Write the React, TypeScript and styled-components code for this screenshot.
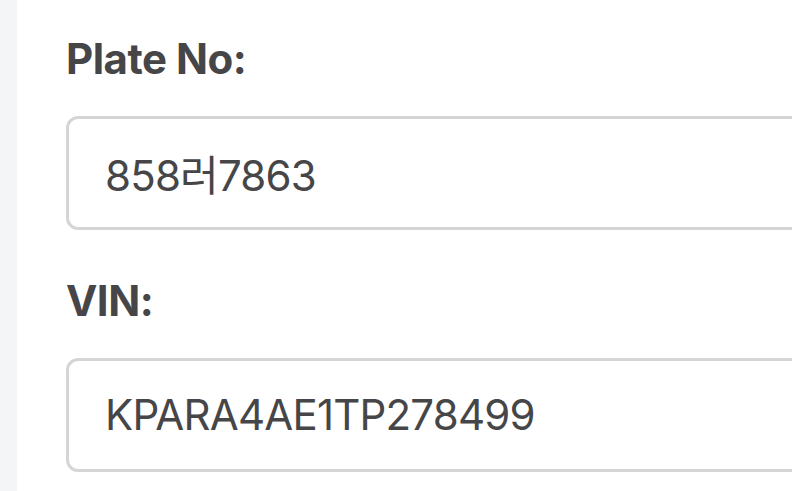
import React from 'react';
import styled, { createGlobalStyle } from 'styled-components';

const GlobalStyle = createGlobalStyle`
  html, body {
    margin: 0;
    padding: 0;
    background: #ffffff;
    overflow: hidden;
  }
  body {
    font-family: Inter, "Noto Sans CJK KR", sans-serif;
  }
`;

const Page = styled.div`
  display: flex;
  width: 792px;
  height: 491px;
  overflow: hidden;
`;

const SideStrip = styled.div`
  flex: 0 0 17px;
  background: #f4f5f7;
`;

const FormPanel = styled.div`
  flex: 1;
  display: flex;
  flex-direction: column;
  padding: 33px 0 0 49px;
  background: #ffffff;
  min-width: 0;
`;

const Field = styled.div`
  display: flex;
  flex-direction: column;
  margin-bottom: 45px;
`;

const Label = styled.label`
  font-family: Inter, "Noto Sans CJK KR", sans-serif;
  font-size: 42px;
  font-weight: 700;
  letter-spacing: -0.5px;
  color: #464648;
  margin-bottom: 32px;
`;

const TextInput = styled.input`
  box-sizing: border-box;
  width: 780px;
  height: 114px;
  padding: 0 36px 2px;
  border: 3px solid #d5d5d7;
  border-radius: 12px;
  font-family: Inter, "Noto Sans CJK KR", sans-serif;
  font-size: 42px;
  font-weight: 400;
  letter-spacing: -0.8px;
  color: #464648;
  background: #ffffff;
  outline: none;
`;

const fields = [
  { id: 'plate', label: 'Plate No:', value: '858러7863' },
  { id: 'vin', label: 'VIN:', value: 'KPARA4AE1TP278499' },
];

export default function App(): React.JSX.Element {
  return (
    <>
      <GlobalStyle />
      <Page>
        <SideStrip />
        <FormPanel>
          {fields.map(f => (
            <Field key={f.id}>
              <Label htmlFor={f.id}>{f.label}</Label>
              <TextInput id={f.id} defaultValue={f.value} readOnly />
            </Field>
          ))}
        </FormPanel>
      </Page>
    </>
  );
}
